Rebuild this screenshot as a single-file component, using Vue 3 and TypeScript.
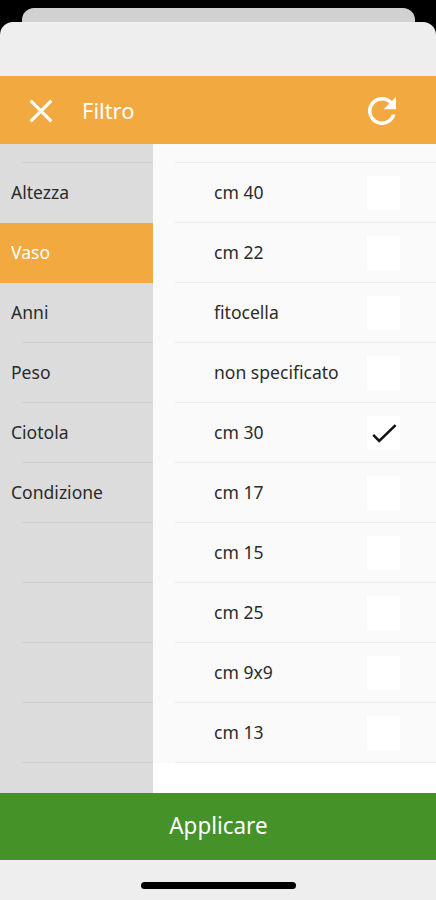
<script setup lang="ts">
import { ref } from 'vue'

const categories = ['Altezza', 'Vaso', 'Anni', 'Peso', 'Ciotola', 'Condizione', '', '', '', '']
const active = ref('Vaso')

const options = [
  'cm 40', 'cm 22', 'fitocella', 'non specificato', 'cm 30',
  'cm 17', 'cm 15', 'cm 25', 'cm 9x9', 'cm 13',
]
const initial = ['cm 30']
const selected = ref<string[]>([...initial])

function pick(name: string) {
  if (name) active.value = name
}

function toggle(option: string) {
  selected.value = selected.value.includes(option)
    ? selected.value.filter((o) => o !== option)
    : [...selected.value, option]
}

function reset() {
  selected.value = [...initial]
}
</script>

<template>
  <div class="screen">
    <div class="back-card"></div>
    <div class="sheet">
      <header class="bar">
        <svg class="close" viewBox="0 0 24 24">
          <path d="M1.6 1.6 22.4 22.4M22.4 1.6 1.6 22.4" />
        </svg>
        <h1 class="title"><span class="label">Filtro</span></h1>
        <svg class="refresh" viewBox="4 4 16 16" @click="reset">
          <path d="M17.65 6.35A7.96 7.96 0 0 0 12 4a8 8 0 1 0 7.73 10h-2.08A6 6 0 1 1 12 6c1.66 0 3.14.69 4.22 1.78L13 11h7V4l-2.35 2.35z" />
        </svg>
      </header>

      <main class="body">
        <nav class="categories">
          <div class="stub"></div>
          <div
            v-for="(name, i) in categories"
            :key="i"
            class="category"
            :class="{ active: name !== '' && name === active, plain: categories[i + 1] === active }"
            @click="pick(name)"
          >
            <span class="label">{{ name }}</span>
          </div>
        </nav>
        <section class="options">
          <div class="stub"></div>
          <div v-for="option in options" :key="option" class="option" @click="toggle(option)">
            <span class="label">{{ option }}</span>
            <span class="box">
              <svg v-if="selected.includes(option)" viewBox="0 0 34 34">
                <path d="M6.2 18.8 12.2 24.9 28.6 9.2" />
              </svg>
            </span>
          </div>
        </section>
      </main>

      <button class="apply" type="button"><span class="label">Applicare</span></button>
      <footer class="home"><span class="indicator"></span></footer>
    </div>
  </div>
</template>

<style>
body {
  background: #000;
}
</style>

<style scoped>
.screen {
  box-sizing: border-box;
  height: 900px;
  padding-top: 8px;
  display: flex;
  flex-direction: column;
  overflow: hidden;
  background: #000;
  color: #2b2b2b;
  font-family: 'Noto Sans', 'Open Sans', sans-serif;
  font-size: 18px;
}
.back-card {
  flex: none;
  height: 14px;
  margin: 0 21px 0 22px;
  border-radius: 12px 12px 0 0;
  background: #d1d1d1;
}
.sheet {
  flex: 1;
  display: flex;
  flex-direction: column;
  padding-top: 54px;
  border-radius: 13px 13px 0 0;
  background: #eee;
}
.bar {
  flex: none;
  box-sizing: border-box;
  height: 68px;
  padding: 1px 40px 0 29px;
  display: flex;
  align-items: center;
  background: #f2a93f;
  color: #fff;
}
.close {
  width: 24px;
  height: 24px;
  fill: none;
  stroke: #fff;
  stroke-width: 3.1;
}
.title {
  flex: 1;
  margin: 1px 0 0 29px;
  font-size: 22.5px;
  font-weight: 400;
  line-height: 30px;
}
.refresh {
  width: 28px;
  height: 28px;
  fill: #fff;
}
.label {
  display: inline-block;
  white-space: nowrap;
  transform: scaleX(0.975);
  transform-origin: left center;
}
.body {
  flex: none;
  height: 649px;
  display: flex;
  overflow: hidden;
  background: #fff;
}
.categories {
  flex: none;
  width: 153px;
  background: #dcdcdc;
}
.options {
  flex: 1;
}
.stub {
  height: 19px;
  box-sizing: border-box;
  background: linear-gradient(#d0d0d0, #d0d0d0) 22px 100% / 100% 1px no-repeat;
}
.category {
  box-sizing: border-box;
  height: 60px;
  padding: 0 0 3px 11px;
  display: flex;
  align-items: center;
  background: linear-gradient(#d0d0d0, #d0d0d0) 22px 100% / 100% 1px no-repeat;
}
.category.plain {
  background: none;
}
.category.active {
  background: #f2a93f;
  color: #fff;
}
.options .stub,
.option {
  background: linear-gradient(#ececec, #ececec) 22px 100% / 100% 1px no-repeat #fafafa;
}
.option {
  box-sizing: border-box;
  height: 60px;
  padding: 0 36px 3px 61px;
  display: flex;
  align-items: center;
  justify-content: space-between;
}
.box {
  width: 33px;
  height: 34px;
  margin-top: 3px;
  background: #fff;
}
.box svg {
  display: block;
  width: 34px;
  height: 34px;
  fill: none;
  stroke: #111;
  stroke-width: 2.5;
}
.apply {
  flex: none;
  height: 67px;
  padding: 0 0 4px;
  border: 0;
  background: #449228;
  color: #fff;
  font: inherit;
  font-size: 23px;
}
.apply .label {
  transform-origin: center;
}
.home {
  flex: 1;
  display: flex;
  justify-content: center;
}
.indicator {
  width: 155px;
  height: 7px;
  margin-top: 22px;
  border-radius: 4px;
  background: #000;
}
</style>
